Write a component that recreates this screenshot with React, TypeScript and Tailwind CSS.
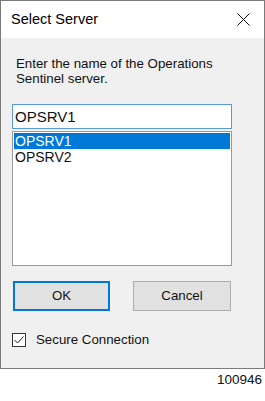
import React from "react";

export default function App() {
  const font = { fontFamily: '"Liberation Sans", Arial, sans-serif' } as React.CSSProperties;
  return (
    <div className="w-[265px] h-[401px] bg-white text-black" style={font}>
      <div className="w-[265px] h-[369px] border border-[#7a7a7a] flex flex-col">
        <div className="h-[37px] bg-white flex items-center justify-between pl-[10px] pr-[14px]">
          <span className="text-[14.5px] leading-none text-black">Select Server</span>
          <svg width="13" height="13" viewBox="0 0 13 13" className="block">
            <path d="M0.5 0.5 L12.5 12.5 M12.5 0.5 L0.5 12.5" stroke="#111" strokeWidth="1" fill="none" />
          </svg>
        </div>
        <div className="flex-1 bg-[#f0f0f0] flex flex-col pt-[18px]">
          <p className="pl-[15px] text-[13.3px] leading-[15px] text-[#111]">
            Enter the name of the Operations
            <br />
            Sentinel server.
          </p>
          <div className="ml-[11px] mt-[18px] w-[220px] h-[25px] border border-[#5a9bd5] bg-white flex items-center pl-[2px] text-[15px] leading-[23px] text-[#111]">
            OPSRV1
          </div>
          <div className="ml-[11px] mt-[2px] w-[220px] h-[135px] border border-[#9a9a9a] bg-white p-[1px] text-[14px] leading-[16px]">
            <div className="h-[16px] bg-[#0078d7] text-white pl-[1px]">OPSRV1</div>
            <div className="h-[16px] text-[#111] pl-[1px]">OPSRV2</div>
          </div>
          <div className="ml-[12px] mt-[15px] flex gap-[23px]">
            <div className="w-[97px] h-[30px] border-2 border-[#0078d7] bg-[#e1e1e1] flex items-center justify-center text-[13.3px] text-[#111]">
              OK
            </div>
            <div className="w-[98px] h-[30px] border border-[#adadad] bg-[#e1e1e1] flex items-center justify-center text-[13.3px] text-[#111]">
              Cancel
            </div>
          </div>
          <div className="ml-[11px] mt-[21px] flex items-center gap-[10px]">
            <div className="w-[14px] h-[14px] border border-[#333] bg-white flex items-center justify-center">
              <svg width="12" height="12" viewBox="0 0 12 12" className="block">
                <path d="M1.5 6 L4.5 9 L10.5 2.5" stroke="#222" strokeWidth="1" fill="none" />
              </svg>
            </div>
            <span className="text-[13.3px] leading-[15px] text-[#111]">Secure Connection</span>
          </div>
        </div>
      </div>
      <div className="flex justify-end pr-[3px] pt-[3px] text-[13.5px] leading-[16px] text-[#111]">100946</div>
    </div>
  );
}
